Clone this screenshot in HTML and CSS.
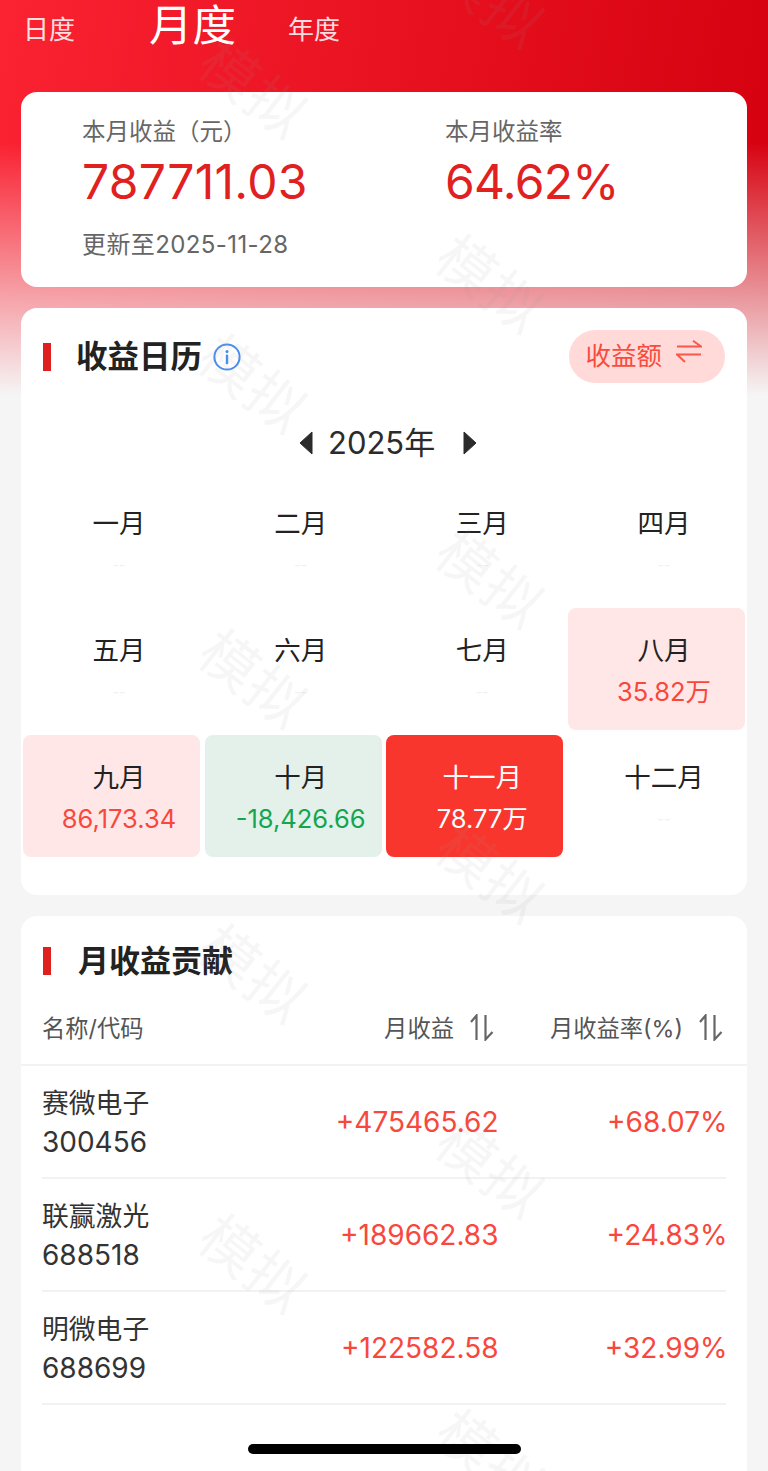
FILE: index.html
```html
<!DOCTYPE html>
<html lang="zh-CN">
<head>
<meta charset="UTF-8">
<title>月度收益</title>
<link rel="stylesheet" href="styles.css">
</head>
<body>
<div class="page">
  <div class="tabs">
    <span class="tab tab-day">日度</span>
    <span class="tab tab-active">月度</span>
    <span class="tab tab-year">年度</span>
  </div>

  <section class="card summary">
    <div class="summary-col summary-left">
      <div class="summary-label">本月收益（元）</div>
      <div class="summary-value">787711.03</div>
      <div class="summary-date">更新至2025-11-28</div>
    </div>
    <div class="summary-col">
      <div class="summary-label">本月收益率</div>
      <div class="summary-value summary-rate">64.62%</div>
    </div>
  </section>

  <section class="card calendar">
    <div class="cal-head">
      <span class="title-bar"></span>
      <h2 class="title">收益日历</h2>
      <svg class="info-icon" viewBox="0 0 28 28" width="28" height="28">
        <circle cx="14" cy="14" r="12.6" fill="none" stroke="#4a8df0" stroke-width="2"/>
        <circle cx="14" cy="8.6" r="1.6" fill="#4a8df0"/>
        <rect x="12.8" y="11.6" width="2.4" height="9.6" rx="1" fill="#4a8df0"/>
      </svg>
      <div class="toggle">
        <span class="toggle-text">收益额</span>
        <svg class="toggle-icon" viewBox="0 0 26 23" width="26" height="23">
          <path d="M1 6.5H25L17 0.8" fill="none" stroke="#f9574c" stroke-width="2"/>
          <path d="M25 14.5H1L9 22" fill="none" stroke="#f9574c" stroke-width="2"/>
        </svg>
      </div>
    </div>

    <div class="year-row">
      <svg class="tri tri-left" viewBox="0 0 14 24" width="14" height="24"><path d="M13 1V23L1 12Z" fill="#2b2b2b" stroke="#2b2b2b" stroke-width="1" stroke-linejoin="round"/></svg>
      <span class="year">2025年</span>
      <svg class="tri tri-right" viewBox="0 0 14 24" width="14" height="24"><path d="M1 1V23L13 12Z" fill="#2b2b2b" stroke="#2b2b2b" stroke-width="1" stroke-linejoin="round"/></svg>
    </div>

    <div class="months">
      <div class="month"><div class="m-name">一月</div><div class="m-val m-none">--</div></div>
      <div class="month"><div class="m-name">二月</div><div class="m-val m-none">--</div></div>
      <div class="month"><div class="m-name">三月</div><div class="m-val m-none">--</div></div>
      <div class="month"><div class="m-name">四月</div><div class="m-val m-none">--</div></div>
      <div class="month"><div class="m-name">五月</div><div class="m-val m-none">--</div></div>
      <div class="month"><div class="m-name">六月</div><div class="m-val m-none">--</div></div>
      <div class="month"><div class="m-name">七月</div><div class="m-val m-none">--</div></div>
      <div class="month month-up"><div class="m-name">八月</div><div class="m-val">35.82万</div></div>
      <div class="month month-up"><div class="m-name">九月</div><div class="m-val">86,173.34</div></div>
      <div class="month month-down"><div class="m-name">十月</div><div class="m-val">-18,426.66</div></div>
      <div class="month month-now"><div class="m-name">十一月</div><div class="m-val">78.77万</div></div>
      <div class="month"><div class="m-name">十二月</div><div class="m-val m-none">--</div></div>
    </div>
  </section>

  <section class="card contrib">
    <div class="contrib-head">
      <span class="title-bar"></span>
      <h2 class="title">月收益贡献</h2>
    </div>
    <div class="t-head">
      <div>名称/代码</div>
      <div class="t-cell-r">月收益
        <svg class="sort" viewBox="0 0 24 27" width="24" height="27">
          <path d="M6.5 26V1.5L1 8" fill="none" stroke="#666" stroke-width="2.2"/>
          <path d="M15.5 1V25.5L22.5 18" fill="none" stroke="#666" stroke-width="2.2"/>
        </svg>
      </div>
      <div class="t-cell-r">月收益率(%)
        <svg class="sort" viewBox="0 0 24 27" width="24" height="27">
          <path d="M6.5 26V1.5L1 8" fill="none" stroke="#666" stroke-width="2.2"/>
          <path d="M15.5 1V25.5L22.5 18" fill="none" stroke="#666" stroke-width="2.2"/>
        </svg>
      </div>
    </div>
    <div class="t-row">
      <div class="t-name"><div>赛微电子</div><div class="t-code">300456</div></div>
      <div class="t-num">+475465.62</div>
      <div class="t-num">+68.07%</div>
    </div>
    <div class="t-row">
      <div class="t-name"><div>联赢激光</div><div class="t-code">688518</div></div>
      <div class="t-num">+189662.83</div>
      <div class="t-num">+24.83%</div>
    </div>
    <div class="t-row">
      <div class="t-name"><div>明微电子</div><div class="t-code">688699</div></div>
      <div class="t-num">+122582.58</div>
      <div class="t-num">+32.99%</div>
    </div>
  </section>

  <div class="watermarks">
    <span class="wm">模拟</span><span class="wm">模拟</span><span class="wm">模拟</span>
    <span class="wm">模拟</span><span class="wm">模拟</span><span class="wm">模拟</span>
    <span class="wm">模拟</span><span class="wm">模拟</span><span class="wm">模拟</span>
    <span class="wm">模拟</span><span class="wm">模拟</span>
  </div>
  <div class="home-bar"></div>
</div>
</body>
</html>
```

FILE: styles.css
```css
* { box-sizing: border-box; }
html, body { margin: 0; padding: 0; }
body { font-family: Inter, "Noto Sans CJK SC", sans-serif; background: #f5f5f5; color: #2b2b2b; }

.page {
  position: relative;
  width: 768px;
  height: 1471px;
  overflow: hidden;
  padding: 0 21px;
  background:
    linear-gradient(to bottom, rgba(245,245,245,0) 36%, rgba(245,245,245,1) 100%) no-repeat 0 0 / 100% 395px,
    linear-gradient(100deg, #fb2232 0%, #d4000e 100%) no-repeat 0 0 / 100% 395px,
    #f5f5f5;
}

/* tabs */
.tabs { display: flex; align-items: center; height: 50px; color: #fff; }
.tab { font-size: 26px; line-height: 50px; opacity: .85; padding-top: 10px; }
.tab-day { margin-left: 2px; }
.tab-active { font-size: 43.5px; opacity: 1; margin-left: 74px; padding-top: 0; }
.tab-year { margin-left: 52px; }

/* cards */
.card { background: #fff; border-radius: 16px; }

.summary { display: flex; height: 195px; margin-top: 42px; padding: 24px 0 0 61px; }
.summary-left { width: 363px; }
.summary-label { font-size: 23.5px; line-height: 32px; color: #666; }
.summary-value { font-size: 48px; line-height: 60px; margin-top: 4px; letter-spacing: .3px; color: #e0211f; }
.summary-rate { letter-spacing: -.7px; }
.summary-date { font-size: 24px; line-height: 32px; margin-top: 17px; letter-spacing: .4px; color: #666; }

.calendar { height: 587px; margin-top: 21px; padding: 22px 2px 0; }
.cal-head { display: flex; align-items: center; height: 53px; padding: 0 20px; }
.title-bar { width: 8px; height: 28px; background: #e0201f; flex: none; }
.title { margin: 0 0 0 25px; font-size: 31.5px; line-height: 40px; font-weight: 700; color: #222; }
.info-icon { margin-left: 11px; }
.toggle {
  display: flex;
  align-items: center;
  gap: 13px;
  height: 53px;
  margin-left: auto;
  padding: 0 23px 0 16px;
  border-radius: 27px;
  background: #ffdad8;
  color: #fa4a3e;
  font-size: 25.5px;
}
.toggle-text { margin-top: -6px; }
.toggle-icon { margin-top: -11px; margin-left: 1px; }

.year-row { display: flex; align-items: center; height: 50px; margin-top: 35px; padding-left: 276px; }
.year { font-size: 31px; line-height: 50px; margin-left: 15px; color: #2b2b2b; }
.tri-right { margin-left: 28px; }

.months { display: grid; grid-template-columns: repeat(4, 177px); grid-auto-rows: 122px; gap: 5px 4.67px; margin-top: 13px; }
.month { padding: 26px 0 0 15px; text-align: center; border-radius: 8px; }
.m-name { font-size: 26.5px; line-height: 32px; color: #222; }
.m-val { font-size: 25.5px; line-height: 32px; margin-top: 10px; }
.m-none { color: #f0f0f0; font-size: 14px; }
.month-up { background: #fee7e6; }
.month-up .m-val { color: #f9473d; }
.month-down { background: #e3f1ea; }
.month-down .m-val { color: #14a550; }
.month-now { background: #f9362e; }
.month-now .m-name, .month-now .m-val { color: #fff; }

/* table */
.contrib { height: 600px; margin-top: 21px; }
.contrib-head { display: flex; align-items: center; height: 90px; padding: 0 0 0 22px; }
.contrib-head .title { margin-left: 27px; font-size: 31px; }
.t-head {
  display: grid;
  grid-template-columns: 1fr 190px 229px;
  align-items: center;
  height: 60px;
  padding: 0 21px 16px;
  border-bottom: 2px solid #f2f2f2;
  font-size: 23.3px;
  color: #555;
}
.t-cell-r { display: flex; align-items: center; justify-content: flex-end; padding-right: 3px; }
.sort { margin-left: 16px; }
.t-row {
  display: grid;
  grid-template-columns: 1fr 190px 229px;
  align-items: center;
  height: 113px;
  margin: 0 21px;
  border-bottom: 2px solid #f2f2f2;
}
.t-name { padding-top: 2px; font-size: 26.8px; line-height: 39px; color: #333; }
.t-code { font-size: 28px; }
.t-num { margin-right: -1.5px; text-align: right; font-size: 28px; color: #f9473d; }

/* watermark */
.watermarks { position: absolute; left: 0; top: 0; width: 100%; height: 100%; pointer-events: none; }
.wm {
  position: absolute;
  width: 130px;
  text-align: center;
  font-size: 57px;
  line-height: 60px;
  letter-spacing: 2px;
  color: rgba(150,150,150,.09);
  transform: rotate(38deg);
}
.wm:nth-child(odd) { left: 425px; }
.wm:nth-child(even) { left: 188px; }
.wm:nth-child(1) { top: -30px; }
.wm:nth-child(2) { top: 60px; }
.wm:nth-child(3) { top: 255px; }
.wm:nth-child(4) { top: 355px; }
.wm:nth-child(5) { top: 550px; }
.wm:nth-child(6) { top: 650px; }
.wm:nth-child(7) { top: 845px; }
.wm:nth-child(8) { top: 945px; }
.wm:nth-child(9) { top: 1140px; }
.wm:nth-child(10) { top: 1235px; }
.wm:nth-child(11) { top: 1430px; }

.home-bar { position: absolute; left: 248px; top: 1444px; width: 273px; height: 10px; border-radius: 5px; background: #000; }
```
